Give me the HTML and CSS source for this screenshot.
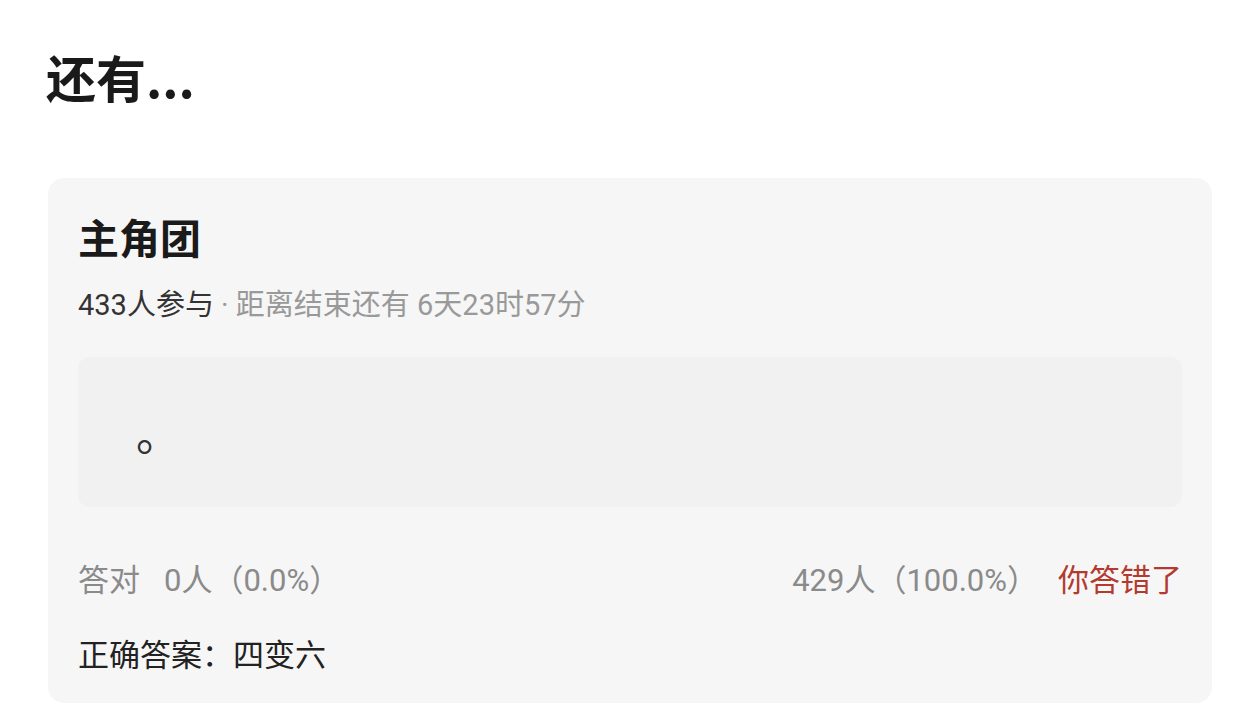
FILE: index.html
```html
<!DOCTYPE html>
<html lang="zh-CN">
<head>
<meta charset="utf-8">
<link rel="stylesheet" href="styles.css">
</head>
<body>
<div class="page">
  <h1 class="heading">还有...</h1>
  <div class="card">
    <h2 class="card-title">主角团</h2>
    <div class="meta"><span class="meta-count">433人参与</span><span class="meta-rest"> · 距离结束还有 6天23时57分</span></div>
    <div class="question"><span class="q-text">。</span></div>
    <div class="stats">
      <div class="stat-left"><span class="stat-label">答对</span>0人（0.0%）</div>
      <div class="stat-right"><span class="stat-wrong">429人（100.0%）</span><span class="verdict">你答错了</span></div>
    </div>
    <div class="answer">正确答案：四变六</div>
  </div>
</div>
</body>
</html>
```
FILE: styles.css
```css
* { box-sizing: border-box; }
html, body { margin: 0; padding: 0; background: #ffffff; }
body {
  font-family: "Roboto", "Noto Sans CJK SC", "Noto Sans", sans-serif;
  width: 1260px;
  height: 708px;
  overflow: hidden;
}
.page {
  padding: 46px 48px 0 46px;
}
.heading {
  margin: 0;
  font-family: "Noto Sans CJK SC", sans-serif;
  font-size: 50px;
  line-height: 60px;
  font-weight: 700;
  color: #1a1a1a;
}
.card {
  margin-top: 72px;
  width: 1164px;
  margin-left: 2px;
  background: #f6f6f6;
  border-radius: 16px;
  padding: 32px 30px 27px 30px;
}
.card-title {
  margin: 0;
  font-family: "Noto Sans CJK SC", sans-serif;
  font-size: 41px;
  line-height: 52px;
  font-weight: 700;
  color: #1a1a1a;
}
.meta {
  margin-top: 23px;
  font-size: 29px;
  line-height: 40px;
}
.meta-count { color: #333333; }
.meta-rest { color: #999999; }
.question {
  margin-top: 32px;
  height: 150px;
  background: #f1f1f1;
  border-radius: 12px;
  display: flex;
  align-items: center;
  padding-left: 58px;
}
.q-text {
  font-family: "Noto Sans CJK SC", sans-serif;
  font-size: 44px;
  line-height: 40px;
  color: #333333;
}
.stats {
  margin-top: 54px;
  display: flex;
  justify-content: space-between;
  font-size: 31px;
  line-height: 40px;
  color: #8a8a8a;
}
.stat-label { margin-right: 24px; }
.stat-right { display: flex; gap: 20px; }
.verdict { color: #b33a2f; }
.answer {
  margin-top: 35px;
  font-size: 31px;
  line-height: 40px;
  color: #222222;
}
```
